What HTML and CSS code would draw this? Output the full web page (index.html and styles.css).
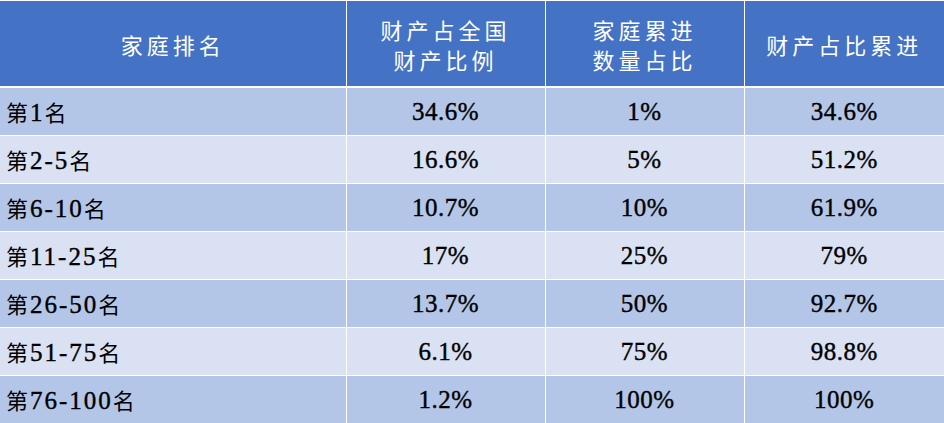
FILE: index.html
```html
<!DOCTYPE html>
<html lang="zh-CN">
<head>
<meta charset="utf-8">
<title>家庭财产排名</title>
<link rel="stylesheet" href="styles.css">
</head>
<body>
<table class="wealth">
  <colgroup>
    <col class="c1"><col class="c2"><col class="c3"><col class="c4">
  </colgroup>
  <thead>
    <tr>
      <th>家庭排名</th>
      <th>财产占全国<br>财产比例</th>
      <th>家庭累进<br>数量占比</th>
      <th>财产占比累进</th>
    </tr>
  </thead>
  <tbody>
    <tr class="odd"><td class="rank">第<span class="num">1</span>名</td><td class="val">34.6%</td><td class="val">1%</td><td class="val">34.6%</td></tr>
    <tr class="even"><td class="rank">第<span class="num">2-5</span>名</td><td class="val">16.6%</td><td class="val">5%</td><td class="val">51.2%</td></tr>
    <tr class="odd"><td class="rank">第<span class="num">6-10</span>名</td><td class="val">10.7%</td><td class="val">10%</td><td class="val">61.9%</td></tr>
    <tr class="even"><td class="rank">第<span class="num">11-25</span>名</td><td class="val">17%</td><td class="val">25%</td><td class="val">79%</td></tr>
    <tr class="odd"><td class="rank">第<span class="num">26-50</span>名</td><td class="val">13.7%</td><td class="val">50%</td><td class="val">92.7%</td></tr>
    <tr class="even"><td class="rank">第<span class="num">51-75</span>名</td><td class="val">6.1%</td><td class="val">75%</td><td class="val">98.8%</td></tr>
    <tr class="odd"><td class="rank">第<span class="num">76-100</span>名</td><td class="val">1.2%</td><td class="val">100%</td><td class="val">100%</td></tr>
  </tbody>
</table>
</body>
</html>
```

FILE: styles.css
```css
html, body {
  margin: 0;
  padding: 0;
  background: #ffffff;
}

.wealth {
  width: 944px;
  border-collapse: collapse;
  table-layout: fixed;
  border-top: 1px solid #ffffff;
}

.c1 { width: 346px; }
.c2 { width: 199px; }
.c3 { width: 199px; }
.c4 { width: 200px; }

.wealth th {
  height: 85px;
  padding: 0;
  background: #4472c4;
  color: #ffffff;
  font-family: "Noto Sans CJK SC", sans-serif;
  font-weight: normal;
  font-size: 22px;
  line-height: 30px;
  letter-spacing: 4px;
  text-align: center;
  vertical-align: middle;
  border-left: 1px solid #ffffff;
  border-bottom: 2px solid #ffffff;
}

.wealth td {
  height: 47px;
  padding: 0;
  line-height: 26px;
  color: #000000;
  text-align: center;
  vertical-align: middle;
  border-left: 1px solid #ffffff;
  border-top: 1px solid #ffffff;
}

.wealth th:first-child,
.wealth td:first-child {
  border-left: none;
}

.wealth td.rank {
  text-align: left;
  padding-left: 6px;
  font-family: "Noto Sans CJK SC", sans-serif;
  font-size: 22px;
}

.rank .num {
  font-family: "Liberation Serif", serif;
  font-size: 25px;
  line-height: 26px;
  letter-spacing: 2px;
  padding-left: 2px;
  -webkit-text-stroke: 0.4px #000000;
}

.wealth td.val {
  font-family: "Liberation Serif", serif;
  font-size: 25px;
  letter-spacing: 0.5px;
  -webkit-text-stroke: 0.4px #000000;
}

.odd td { background: #b4c6e7; }
.even td { background: #d9e1f2; }
```
